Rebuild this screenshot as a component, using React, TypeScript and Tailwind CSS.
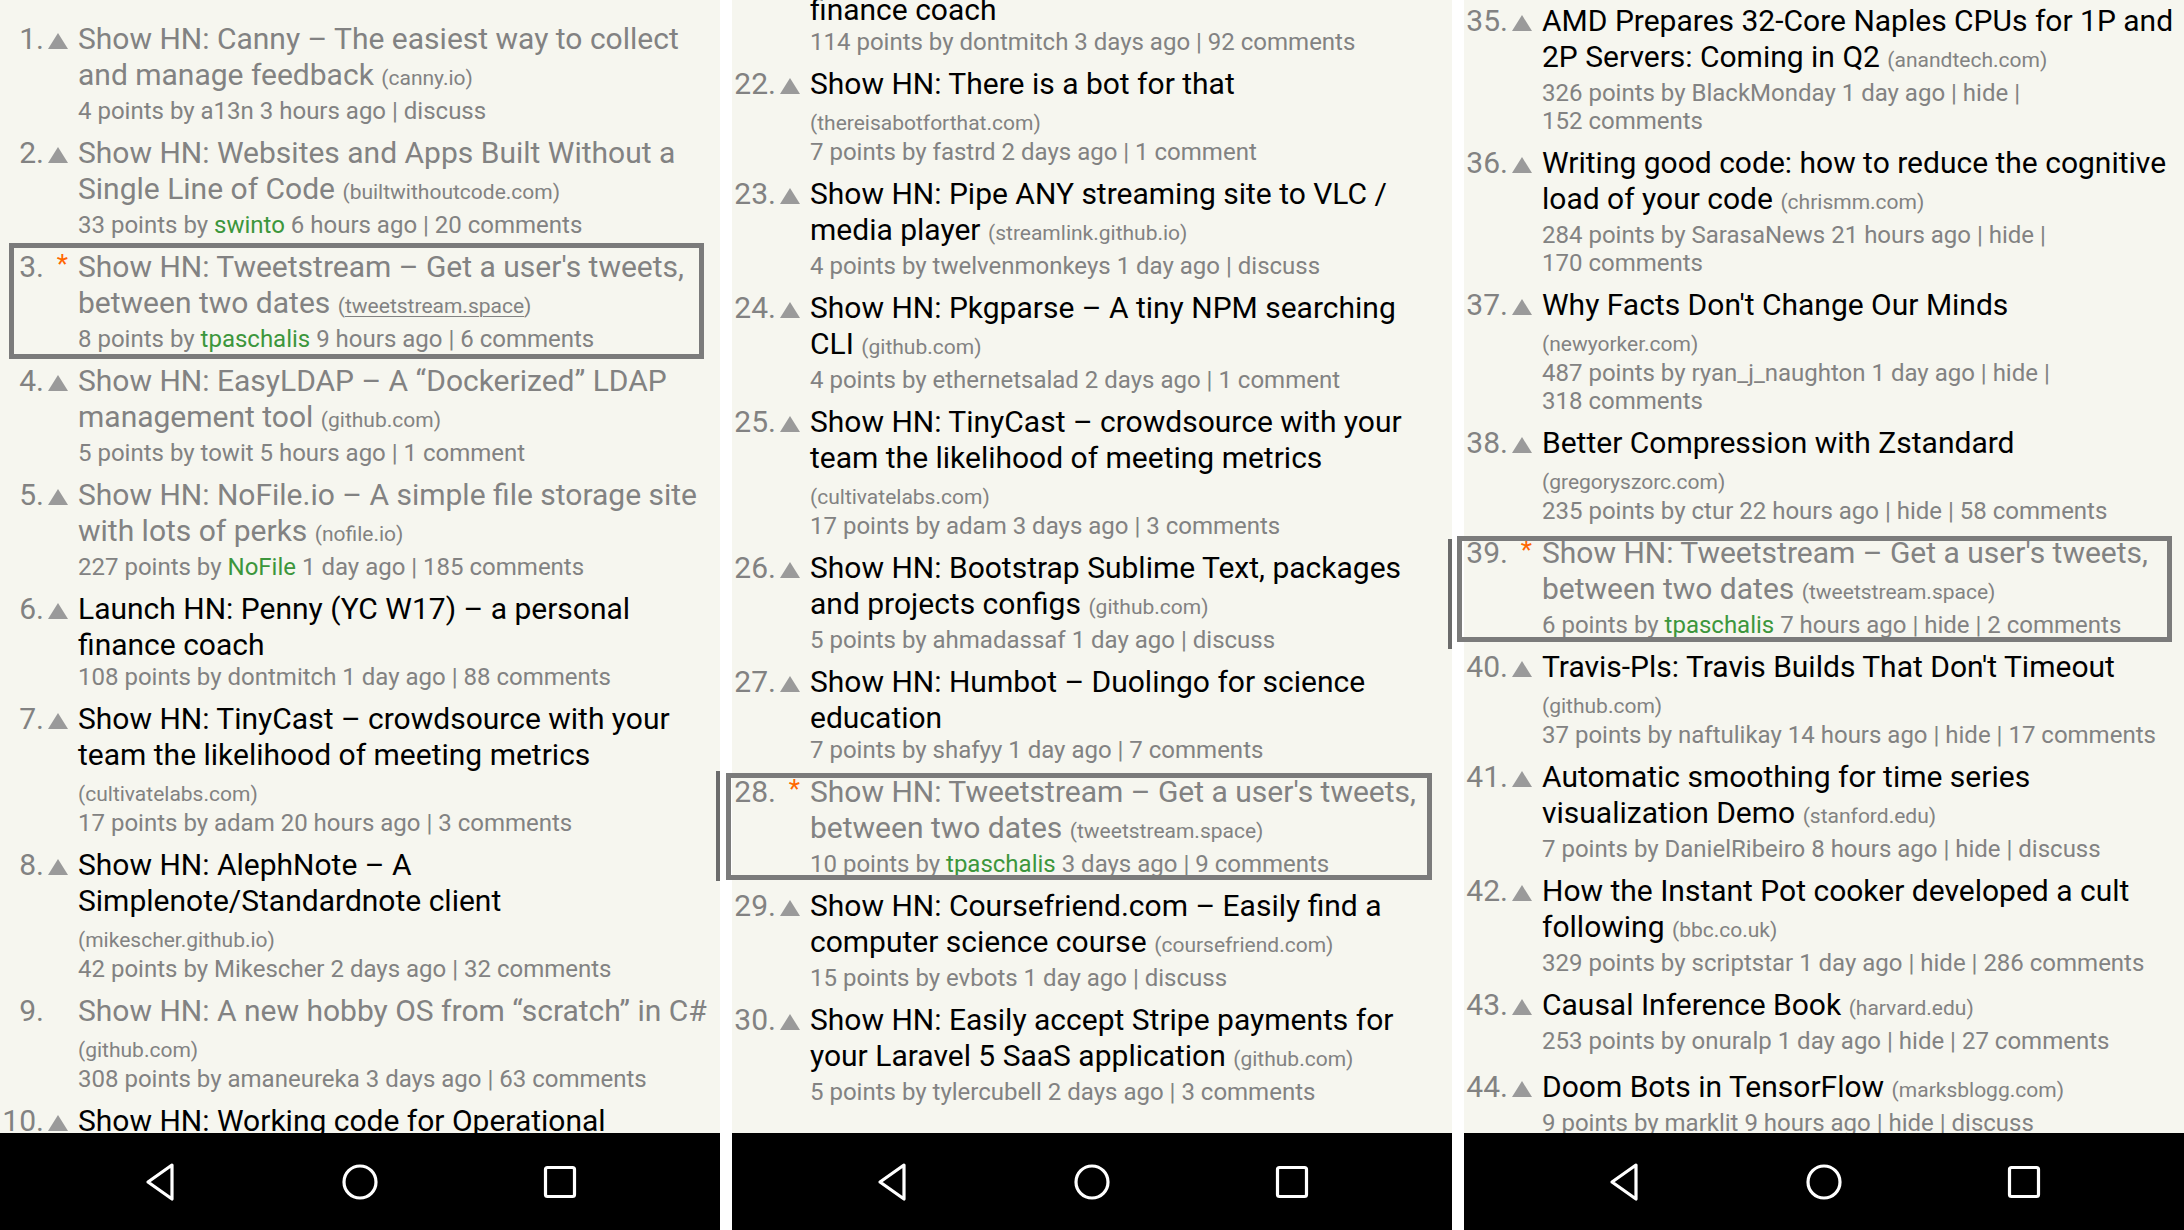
import React from "react";

type Item = {
  n: number;
  title: string[];
  domain?: string;
  domainLine?: boolean;
  underline?: boolean;
  read?: boolean;
  mark?: "up" | "star" | "none";
  meta: string[];
  box?: string;
  loose?: boolean;
};

type Panel = {
  offset: string;
  scroll?: string;
  items: Item[];
};

const panels: Panel[] = [
  {
    offset: "mt-[21px]",
    scroll: "top-[771px] h-[110px]",
    items: [
      { n: 1, read: true, title: ["Show HN: Canny – The easiest way to collect", "and manage feedback"], domain: "canny.io", meta: ["4 points by a13n 3 hours ago | discuss"] },
      { n: 2, read: true, title: ["Show HN: Websites and Apps Built Without a", "Single Line of Code"], domain: "builtwithoutcode.com", meta: ["33 points by {swinto} 6 hours ago | 20 comments"] },
      {
        n: 3,
        read: true,
        mark: "star",
        underline: true,
        title: ["Show HN: Tweetstream – Get a user's tweets,", "between two dates"],
        domain: "tweetstream.space",
        meta: ["8 points by {tpaschalis} 9 hours ago | 6 comments"],
        box: "left-[9px] right-[16px] -top-[6px] bottom-[4px]",
      },
      { n: 4, read: true, title: ["Show HN: EasyLDAP – A “Dockerized” LDAP", "management tool"], domain: "github.com", meta: ["5 points by towit 5 hours ago | 1 comment"] },
      { n: 5, read: true, title: ["Show HN: NoFile.io – A simple file storage site", "with lots of perks"], domain: "nofile.io", meta: ["227 points by {NoFile} 1 day ago | 185 comments"] },
      { n: 6, title: ["Launch HN: Penny (YC W17) – a personal", "finance coach"], meta: ["108 points by dontmitch 1 day ago | 88 comments"] },
      { n: 7, title: ["Show HN: TinyCast – crowdsource with your", "team the likelihood of meeting metrics"], domain: "cultivatelabs.com", domainLine: true, meta: ["17 points by adam 20 hours ago | 3 comments"] },
      { n: 8, title: ["Show HN: AlephNote – A", "Simplenote/Standardnote client"], domain: "mikescher.github.io", domainLine: true, meta: ["42 points by Mikescher 2 days ago | 32 comments"] },
      { n: 9, read: true, mark: "none", title: ["Show HN: A new hobby OS from “scratch” in C#"], domain: "github.com", domainLine: true, meta: ["308 points by amaneureka 3 days ago | 63 comments"] },
      { n: 10, title: ["Show HN: Working code for Operational", "Transformation"], domain: "github.com", meta: ["12 points by kofi 2 days ago | 4 comments"] },
    ],
  },
  {
    offset: "-mt-[44px]",
    scroll: "top-[539px] h-[110px]",
    items: [
      { n: 21, title: ["Launch HN: Penny (YC W17) – a personal", "finance coach"], meta: ["114 points by dontmitch 3 days ago | 92 comments"] },
      { n: 22, title: ["Show HN: There is a bot for that"], domain: "thereisabotforthat.com", domainLine: true, meta: ["7 points by fastrd 2 days ago | 1 comment"] },
      { n: 23, title: ["Show HN: Pipe ANY streaming site to VLC /", "media player"], domain: "streamlink.github.io", meta: ["4 points by twelvenmonkeys 1 day ago | discuss"] },
      { n: 24, title: ["Show HN: Pkgparse – A tiny NPM searching", "CLI"], domain: "github.com", meta: ["4 points by ethernetsalad 2 days ago | 1 comment"] },
      { n: 25, title: ["Show HN: TinyCast – crowdsource with your", "team the likelihood of meeting metrics"], domain: "cultivatelabs.com", domainLine: true, meta: ["17 points by adam 3 days ago | 3 comments"] },
      { n: 26, title: ["Show HN: Bootstrap Sublime Text, packages", "and projects configs"], domain: "github.com", meta: ["5 points by ahmadassaf 1 day ago | discuss"] },
      { n: 27, title: ["Show HN: Humbot – Duolingo for science", "education"], meta: ["7 points by shafyy 1 day ago | 7 comments"] },
      {
        n: 28,
        read: true,
        mark: "star",
        title: ["Show HN: Tweetstream – Get a user's tweets,", "between two dates"],
        domain: "tweetstream.space",
        meta: ["10 points by {tpaschalis} 3 days ago | 9 comments"],
        box: "-left-[6px] right-[20px] -top-[1px] bottom-[8px]",
      },
      { n: 29, title: ["Show HN: Coursefriend.com – Easily find a", "computer science course"], domain: "coursefriend.com", meta: ["15 points by evbots 1 day ago | discuss"] },
      { n: 30, title: ["Show HN: Easily accept Stripe payments for", "your Laravel 5 SaaS application"], domain: "github.com", meta: ["5 points by tylercubell 2 days ago | 3 comments"] },
    ],
  },
  {
    offset: "mt-[3px]",
    items: [
      { n: 35, title: ["AMD Prepares 32-Core Naples CPUs for 1P and", "2P Servers: Coming in Q2"], domain: "anandtech.com", meta: ["326 points by BlackMonday 1 day ago | hide |", "152 comments"] },
      { n: 36, title: ["Writing good code: how to reduce the cognitive", "load of your code"], domain: "chrismm.com", meta: ["284 points by SarasaNews 21 hours ago | hide |", "170 comments"] },
      { n: 37, title: ["Why Facts Don't Change Our Minds"], domain: "newyorker.com", domainLine: true, meta: ["487 points by ryan_j_naughton 1 day ago | hide |", "318 comments"] },
      { n: 38, title: ["Better Compression with Zstandard"], domain: "gregoryszorc.com", domainLine: true, meta: ["235 points by ctur 22 hours ago | hide | 58 comments"] },
      {
        n: 39,
        read: true,
        mark: "star",
        title: ["Show HN: Tweetstream – Get a user's tweets,", "between two dates"],
        domain: "tweetstream.space",
        meta: ["6 points by {tpaschalis} 7 hours ago | hide | 2 comments"],
        box: "-left-[7px] right-[12px] top-[1px] bottom-[7px]",
      },
      { n: 40, title: ["Travis-Pls: Travis Builds That Don't Timeout"], domain: "github.com", domainLine: true, meta: ["37 points by naftulikay 14 hours ago | hide | 17 comments"] },
      { n: 41, title: ["Automatic smoothing for time series", "visualization Demo"], domain: "stanford.edu", meta: ["7 points by DanielRibeiro 8 hours ago | hide | discuss"] },
      { n: 42, title: ["How the Instant Pot cooker developed a cult", "following"], domain: "bbc.co.uk", meta: ["329 points by scriptstar 1 day ago | hide | 286 comments"] },
      { n: 43, loose: true, title: ["Causal Inference Book"], domain: "harvard.edu", meta: ["253 points by onuralp 1 day ago | hide | 27 comments"] },
      { n: 44, title: ["Doom Bots in TensorFlow"], domain: "marksblogg.com", meta: ["9 points by marklit 9 hours ago | hide | discuss"] },
    ],
  },
];

function MetaLine({ text }: { text: string }) {
  // {name} marks a green (new) user
  const parts = text.split(/\{(.+?)\}/);
  return (
    <div className="whitespace-nowrap">
      {parts.map((p, i) =>
        i % 2 === 1 ? (
          <span key={i} className="text-[#3c963c]">
            {p}
          </span>
        ) : (
          <span key={i}>{p}</span>
        )
      )}
    </div>
  );
}

function Domain({ item }: { item: Item }) {
  return (
    <span className="text-[21px] leading-none text-[#828282]">
      (
      {item.underline ? <span className="underline decoration-1 underline-offset-[3px]">{item.domain}</span> : item.domain})
    </span>
  );
}

function Row({ item }: { item: Item }) {
  const mark = item.mark ?? "up";
  const last = item.title.length - 1;
  const inline = !!item.domain && !item.domainLine;
  return (
    <div className={item.loose ? "relative flex pb-[14px]" : "relative flex pb-[10px]"}>
      {item.box && <div className={`pointer-events-none absolute border-[5px] border-[#7b7b7b] ${item.box}`} />}
      <div className="w-[44px] shrink-0 text-right text-[30px] leading-[36px] text-[#828282]">{item.n}.</div>
      <div className="w-[34px] shrink-0">
        <div className="flex h-[36px] w-[24px] justify-end">
          {mark === "up" && (
            <svg width="20" height="16" viewBox="0 0 20 16" className="mt-[12px]">
              <polygon points="10,0 20,16 0,16" fill="#9a9a9a" />
            </svg>
          )}
          {mark === "star" && <span className="text-[26px] leading-[30px] text-[#ff6600]">*</span>}
        </div>
      </div>
      <div className="min-w-0 flex-1">
        <div className={`text-[30px] leading-[36px] ${item.read ? "text-[#828282]" : "text-black"}`}>
          {item.title.map((line, i) => (
            <div key={i} className={i === last && inline ? "whitespace-nowrap pb-[4px]" : "whitespace-nowrap"}>
              {line}
              {i === last && inline && (
                <>
                  {" "}
                  <Domain item={item} />
                </>
              )}
            </div>
          ))}
          {item.domain && item.domainLine && (
            <div className="whitespace-nowrap">
              <Domain item={item} />
            </div>
          )}
        </div>
        <div className="text-[24px] leading-[28px] text-[#828282]">
          {item.meta.map((m, i) => (
            <MetaLine key={i} text={m} />
          ))}
        </div>
      </div>
    </div>
  );
}

function NavBar() {
  return (
    <div className="flex h-[97px] shrink-0 items-center justify-between bg-black px-[110px]">
      <div className="flex w-[100px] justify-center">
        <svg width="34" height="40" viewBox="0 0 34 40" fill="none">
          <path d="M29 3 L5 20 L29 37 Z" stroke="white" strokeWidth="3.2" strokeLinejoin="round" />
        </svg>
      </div>
      <div className="flex w-[100px] justify-center">
        <svg width="38" height="38" viewBox="0 0 38 38" fill="none">
          <circle cx="19" cy="19" r="16" stroke="white" strokeWidth="3.2" />
        </svg>
      </div>
      <div className="flex w-[100px] justify-center">
        <svg width="34" height="34" viewBox="0 0 34 34" fill="none">
          <rect x="2.5" y="2.5" width="29" height="29" rx="2" stroke="white" strokeWidth="3.2" />
        </svg>
      </div>
    </div>
  );
}

function Phone({ panel }: { panel: Panel }) {
  return (
    <div className="flex h-full w-[720px] shrink-0 flex-col">
      <div className="relative min-h-0 flex-1 overflow-x-visible overflow-y-clip bg-[#f6f6ef]">
        <div className={panel.offset}>
          {panel.items.map((item) => (
            <Row key={item.n} item={item} />
          ))}
        </div>
        {panel.scroll && <div className={`absolute right-0 w-[4px] bg-[#6b6b6b] ${panel.scroll}`} />}
      </div>
      <NavBar />
    </div>
  );
}

export default function App() {
  return (
    <div className="flex h-[1230px] w-[2184px] gap-[12px] overflow-hidden bg-white font-['Roboto',sans-serif]">
      {panels.map((p, i) => (
        <Phone key={i} panel={p} />
      ))}
    </div>
  );
}
